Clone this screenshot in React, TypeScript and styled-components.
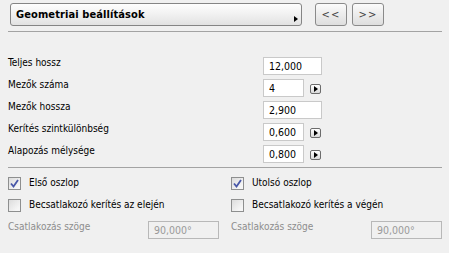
import React from "react";
import styled, { createGlobalStyle } from "styled-components";

const Global = createGlobalStyle`
  html, body { margin: 0; padding: 0; background: #f0f0f0; }
  body {
    font-family: "DejaVu Sans Condensed", "Liberation Sans", sans-serif;
    font-size: 10px;
    color: #000;
    width: 449px;
    height: 253px;
    overflow: hidden;
  }
`;

const Root = styled.div`
  padding-top: 3px;
  width: 449px;
  height: 253px;
  box-sizing: border-box;
`;

const Header = styled.div`
  display: flex;
  align-items: flex-start;
  padding-left: 10px;
`;

const Dropdown = styled.div`
  width: 292px;
  height: 23px;
  box-sizing: border-box;
  border: 1px solid #858585;
  border-radius: 3px;
  background: linear-gradient(#fefefe, #f2f2f2 45%, #e2e2e2);
  display: flex;
  padding: 0 3px 0 5px;
`;

const Title = styled.span`
  flex: 1;
  font-weight: bold;
  font-size: 11px;
  line-height: 21px;
  letter-spacing: 0.1px;
`;

const Caret = styled.span`
  align-self: flex-end;
  margin-bottom: 3px;
  width: 0;
  height: 0;
  border-top: 3px solid transparent;
  border-bottom: 3px solid transparent;
  border-left: 4px solid #000;
`;

const NavGroup = styled.div`
  display: flex;
  gap: 5px;
  margin-left: 13px;
`;

const NavButton = styled.button`
  width: 32px;
  height: 23px;
  box-sizing: border-box;
  border: 1px solid #8a8a8a;
  border-radius: 3px;
  background: linear-gradient(#fbfbfb, #ececec 50%, #dedede);
  font-family: "DejaVu Sans", sans-serif;
  font-size: 10px;
  color: #444;
  padding: 0;
  letter-spacing: 1px;
`;

const Divider = styled.div<{ $top: number }>`
  height: 1px;
  background: #a3a3a3;
  margin: ${(p) => p.$top}px 7px 0 8px;
`;

const Form = styled.div`
  padding: 25px 0 0 8px;
  display: flex;
  flex-direction: column;
  gap: 4px;
`;

const Row = styled.div`
  display: flex;
  align-items: flex-start;
  height: 18px;
`;

const Label = styled.span`
  width: 255px;
  line-height: 12px;
`;

const Field = styled.div<{ $w: number; $disabled?: boolean }>`
  width: ${(p) => p.$w}px;
  height: 18px;
  box-sizing: border-box;
  border: 1px solid ${(p) => (p.$disabled ? "#b8b8b8" : "#c9c9c9")};
  background: ${(p) => (p.$disabled ? "#f0f0f0" : "#fff")};
  color: ${(p) => (p.$disabled ? "#999" : "#000")};
  padding-left: 5px;
  line-height: 16px;
  font-size: 10.5px;
`;

const Spin = styled.span`
  margin: 5px 0 0 6px;
  width: 11px;
  height: 10px;
  box-sizing: border-box;
  border: 1px solid #6c6c6c;
  border-radius: 2px;
  background: linear-gradient(#fff, #d9d9d9);
  display: flex;
  align-items: center;
  justify-content: center;
  &::after {
    content: "";
    width: 0;
    height: 0;
    border-top: 3px solid transparent;
    border-bottom: 3px solid transparent;
    border-left: 4px solid #000;
    margin-left: 1px;
  }
`;

const Options = styled.div`
  padding: 9px 0 0 8px;
  display: grid;
  grid-template-columns: 211px 211px;
  column-gap: 12px;
  row-gap: 9px;
`;

const CheckRow = styled.label`
  display: flex;
  align-items: center;
  gap: 8px;
  height: 13px;
`;

const Box = styled.span<{ $checked?: boolean }>`
  width: 13px;
  height: 13px;
  box-sizing: border-box;
  border: 1px solid #8e8f8f;
  background: linear-gradient(135deg, #dcdcdc, #f6f6f6 80%);
  display: flex;
  align-items: center;
  justify-content: center;
`;

const CheckText = styled.span`
  line-height: 12px;
  margin-top: -2px;
`;

const AngleRow = styled.div`
  display: flex;
  align-items: flex-start;
  justify-content: space-between;
  height: 18px;
`;

const DisabledLabel = styled.span`
  color: #8d8d8d;
  line-height: 12px;
`;

const Check = () => (
  <svg width="9" height="9" viewBox="0 0 9 9">
    <path d="M1 4.5 L3.5 7.5 L8 1" fill="none" stroke="#4857a8" strokeWidth="1.8" />
  </svg>
);

const rows = [
  { label: "Teljes hossz", value: "12,000", spin: false },
  { label: "Mezők száma", value: "4", spin: true },
  { label: "Mezők hossza", value: "2,900", spin: false },
  { label: "Kerítés szintkülönbség", value: "0,600", spin: true },
  { label: "Alapozás mélysége", value: "0,800", spin: true },
];

export default function App() {
  return (
    <Root>
      <Global />
      <Header>
        <Dropdown>
          <Title>Geometriai beállítások</Title>
          <Caret />
        </Dropdown>
        <NavGroup>
          <NavButton>&lt;&lt;</NavButton>
          <NavButton>&gt;&gt;</NavButton>
        </NavGroup>
      </Header>
      <Divider $top={5} />
      <Form>
        {rows.map((r) => (
          <Row key={r.label}>
            <Label>{r.label}</Label>
            <Field $w={r.spin ? 41 : 59}>{r.value}</Field>
            {r.spin && <Spin />}
          </Row>
        ))}
      </Form>
      <Divider $top={4} />
      <Options>
        <CheckRow>
          <Box $checked>
            <Check />
          </Box>
          <CheckText>Első oszlop</CheckText>
        </CheckRow>
        <CheckRow>
          <Box $checked>
            <Check />
          </Box>
          <CheckText>Utolsó oszlop</CheckText>
        </CheckRow>
        <CheckRow>
          <Box />
          <CheckText>Becsatlakozó kerítés az elején</CheckText>
        </CheckRow>
        <CheckRow>
          <Box />
          <CheckText>Becsatlakozó kerítés a végén</CheckText>
        </CheckRow>
        <AngleRow>
          <DisabledLabel>Csatlakozás szöge</DisabledLabel>
          <Field $w={71} $disabled>
            90,000°
          </Field>
        </AngleRow>
        <AngleRow>
          <DisabledLabel>Csatlakozás szöge</DisabledLabel>
          <Field $w={71} $disabled>
            90,000°
          </Field>
        </AngleRow>
      </Options>
    </Root>
  );
}
